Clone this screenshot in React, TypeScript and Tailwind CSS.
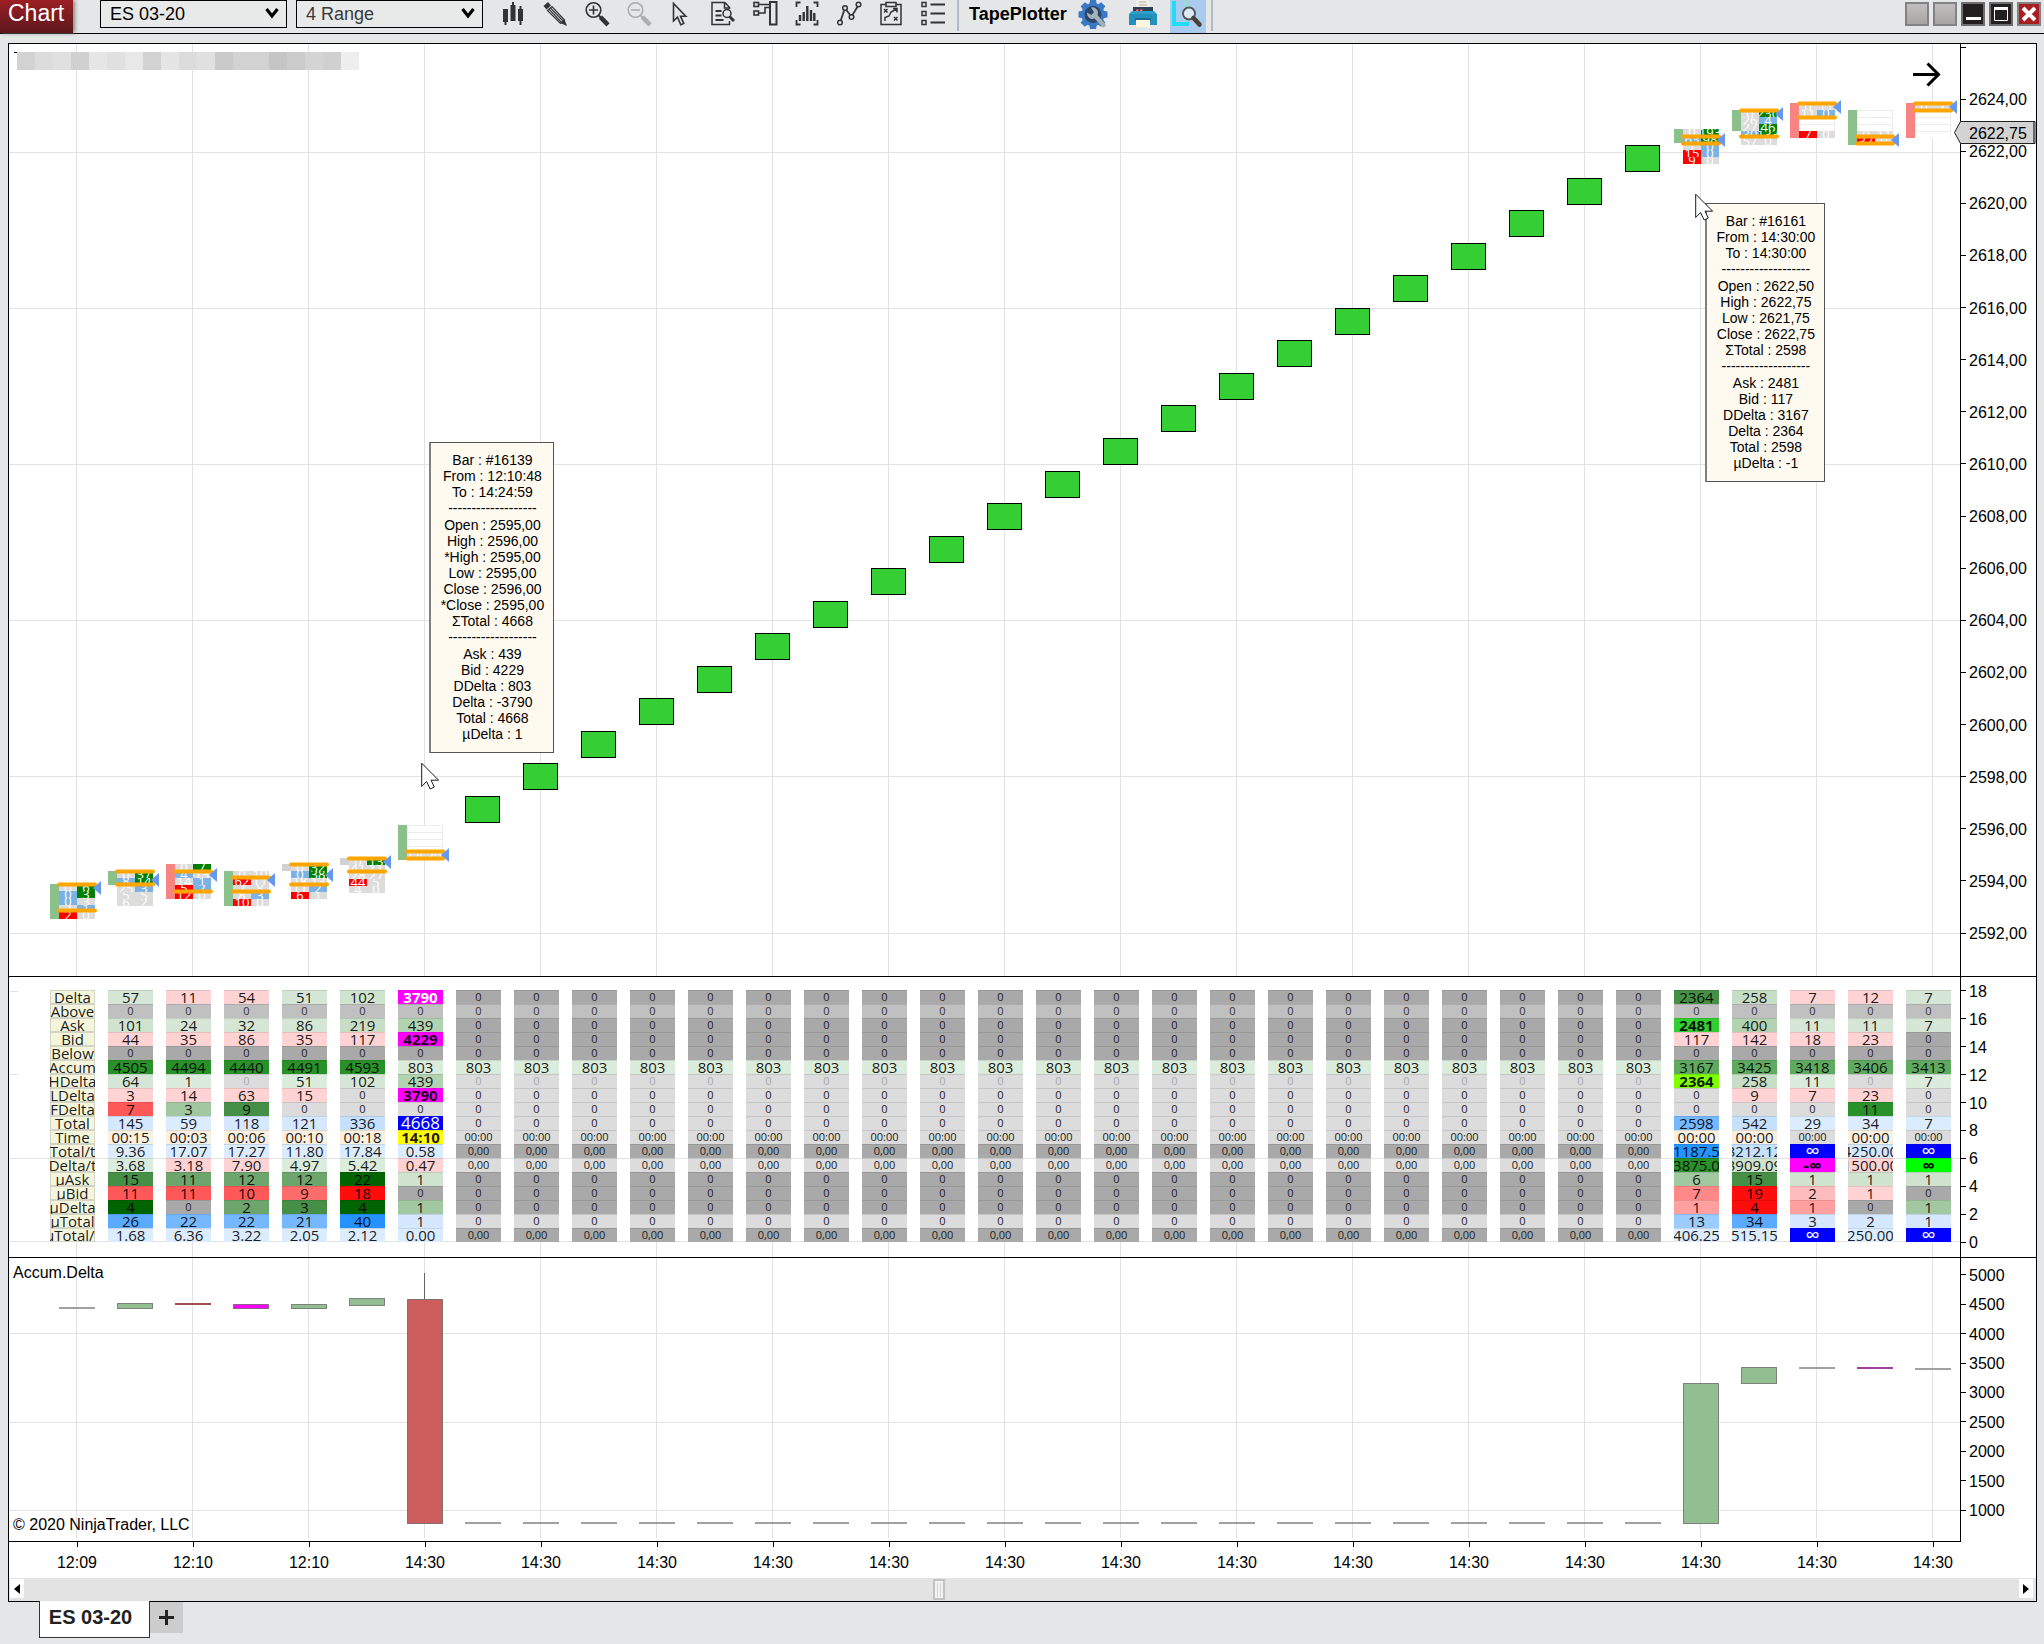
import React from "react";

/* ---------- shared chart geometry ---------- */

const STEP = 58;
const FIRST = 76;
const columns = Array.from({ length: 33 }, (_, i) => i);
const cx = (i: number) => FIRST + STEP * i;
const gridColumns = columns.filter((i) => i % 2 === 0);

const GRID = "#e2e2e2";

/* ---------- price panel data ---------- */

const prices = Array.from({ length: 17 }, (_, i) => `${2624 - i * 2},00`);
const counts = Array.from({ length: 10 }, (_, i) => `${18 - i * 2}`);
const deltas = Array.from({ length: 9 }, (_, i) => `${5000 - i * 500}`);
const times = ["12:09", "12:10", "12:10", ...Array.from({ length: 14 }, () => "14:30")];

const ink: Record<string, string> = {
  g: "#dcdcdc",
  b: "#7ab2e4",
  G: "#008000",
  R: "#ff0000",
  w: "#ffffff",
};

type Footprint = {
  col: number;
  top: number;
  side: [string, number, number];
  rows: [string, string, string, string][];
  lines: [number, number];
  close: number;
};

const UP = "#8bc08b";
const DOWN = "#f78383";
const FLAT = "#d2d2d2";
const blank: [string, string, string, string] = ["w", "", "w", ""];

const footprints: Footprint[] = [
  { col: 0, top: 884, side: [UP, 884, 35], rows: [["g", "0", "G", "6"], ["b", "0", "G", "3"], ["b", "0", "g", "3"], ["g", "2", "b", "1"], ["R", "2", "g", "0"]], lines: [884, 910], close: 888 },
  { col: 1, top: 871, side: [UP, 871, 14], rows: [["g", "0", "G", "37"], ["b", "8", "G", "14"], ["g", "25", "b", "3"], ["g", "5", "g", "5"], ["g", "6", "g", "2"]], lines: [871, 884], close: 880 },
  { col: 2, top: 864, side: [DOWN, 864, 35], rows: [["g", "0", "G", "7"], ["b", "4", "g", "13"], ["g", "14", "b", "1"], ["R", "5", "b", "2"], ["R", "12", "g", "0"]], lines: [871, 891], close: 875 },
  { col: 3, top: 871, side: [UP, 871, 35], rows: [["g", "0", "g", "10"], ["R", "62", "g", "11"], ["g", "7", "g", "8"], ["g", "8", "b", "3"], ["R", "10", "g", "0"]], lines: [877, 891], close: 880 },
  { col: 4, top: 864, side: [FLAT, 864, 7], rows: [["g", "0", "G", "32"], ["b", "0", "G", "38"], ["g", "18", "g", "13"], ["g", "11", "b", "2"], ["R", "6", "g", "1"]], lines: [864, 884], close: 875 },
  { col: 5, top: 858, side: [FLAT, 858, 7], rows: [["g", "0", "G", "13"], ["g", "41", "g", "11"], ["g", "28", "g", "27"], ["R", "44", "g", "5"], ["g", "4", "g", "0"]], lines: [858, 871], close: 862 },
  { col: 6, top: 825, side: [UP, 825, 35], rows: [blank, blank, blank, blank, ["g", "229", "g", "39"]], lines: [851, 858], close: 855 },
  { col: 28, top: 129, side: [UP, 129, 14], rows: [["g", "0", "G", "193"], ["b", "63", "G", "98"], ["g", "1", "b", "0"], ["R", "15", "b", "0"], ["R", "9", "g", "0"]], lines: [136, 143], close: 140 },
  { col: 29, top: 110, side: [UP, 110, 21], rows: [["g", "0", "G", "230"], ["g", "26", "b", "4"], ["g", "27", "G", "46"], ["b", "30", "G", "133"], ["g", "57", "g", "0"]], lines: [110, 136], close: 114 },
  { col: 30, top: 103, side: [DOWN, 103, 35], rows: [["g", "0", "g", "11"], ["g", "11", "b", "0"], blank, blank, ["R", "7", "g", "0"]], lines: [103, 117], close: 107 },
  { col: 31, top: 110, side: [UP, 110, 35], rows: [blank, blank, blank, ["g", "0", "g", "11"], ["R", "37", "g", "0"]], lines: [136, 143], close: 140 },
  { col: 32, top: 103, side: [DOWN, 103, 35], rows: [["g", "0", "g", "7"], blank, blank, blank, blank], lines: [103, 110], close: 107 },
];

function FootprintBar({ bar }: { bar: Footprint }) {
  const left = cx(bar.col) - 17;
  return (
    <g>
      <rect x={left - 9} y={bar.side[1]} width={9} height={bar.side[2]} fill={bar.side[0]} />
      {bar.rows.map(([lt, l, rt, r], k) => {
        const y = bar.top + k * 7;
        return (
          <g key={k}>
            {[[lt, l, 0], [rt, r, 18]].map(([tone, text, dx]) => (
              <svg key={String(dx)} x={left + Number(dx)} y={y} width={18} height={7}>
                <rect width={18} height={7} fill={ink[String(tone)]} />
                {tone === "w" && <path d="M0 .5H18" stroke="#ececec" />}
                {tone === "w" && <path d={dx === 0 ? "M.5 0V7" : "M17.5 0V7"} stroke="#ececec" />}
                <text x={9} y={8} textAnchor="middle" fontSize={13} fill="#fff" fontFamily="Open Sans, sans-serif">
                  {text}
                </text>
              </svg>
            ))}
          </g>
        );
      })}
      {bar.lines.map((y) => (
        <path key={y} d={`M${left} ${y + 0.5}H${left + 36}`} stroke="#ffa500" strokeWidth={4} strokeLinecap="round" />
      ))}
      <path d={`M${left + 34} ${bar.close}l8 -7v14z`} fill="#6699ee" />
    </g>
  );
}

function PricePlot() {
  return (
    <svg viewBox="9 44 1951 932" className="block h-auto w-full" role="img" aria-label="Price chart">
      {gridColumns.map((i) => (
        <path key={i} d={`M${cx(i) + 0.5} 44V976`} stroke={GRID} />
      ))}
      {[152, 308, 464, 620, 776, 933].map((y) => (
        <path key={y} d={`M9 ${y + 0.5}H1960`} stroke={GRID} />
      ))}
      {Array.from({ length: 21 }, (_, k) => (
        <rect
          key={k}
          x={465.5 + STEP * k}
          y={Math.round(796 - 32.55 * k) + 0.5}
          width={34}
          height={26}
          fill="#35cf35"
          stroke="#000"
        />
      ))}
      {footprints.map((bar) => (
        <FootprintBar key={bar.col} bar={bar} />
      ))}
      <path d="M1913 74.5H1938M1927.500 63.500L1938.500 74.500L1927.500 85.500" fill="none" stroke="#000" strokeWidth={3} />
    </svg>
  );
}

/* ---------- statistics table ---------- */

const tone: Record<string, string> = {
  D: "bg-[#a9a9a9] text-[11px] text-[#222]",
  M: "bg-[#c0c0c0] text-[11px] text-[#333]",
  L: "bg-[#dcdcdc] text-[11px] text-[#222]",
  F: "bg-[#dcdcdc] text-[11px] text-[#aaa]",
  g0: "bg-[#dcecdc]",
  g1: "bg-[#d6e6d6]",
  g2: "bg-[#cfe3cf]",
  g3: "bg-[#c6dec6]",
  g4: "bg-[#b2d2b2]",
  g5: "bg-[#a2c8a2]",
  g6: "bg-[#6ca66c]",
  g7: "bg-[#60aa60]",
  g8: "bg-[#468f46]",
  g9: "bg-[#2a902a]",
  gx: "bg-[#006400]",
  r1: "bg-[#ffd3d3]",
  r2: "bg-[#ffbcbc]",
  r3: "bg-[#ffa0a0]",
  r4: "bg-[#ff8888]",
  r5: "bg-[#ff6c6c]",
  r6: "bg-[#ff5858]",
  r7: "bg-[#ff0d0d]",
  b0: "bg-[#dcecff]",
  b1: "bg-[#d6e8ff]",
  b2: "bg-[#c6e0ff]",
  b3: "bg-[#9accff]",
  b4: "bg-[#76b8ff]",
  b5: "bg-[#5aaaff]",
  b6: "bg-[#2492ff]",
  t: "bg-[#faf0e0]",
  y: "bg-[#ffff00] font-bold",
  mw: "bg-[#ff00ff] font-bold text-white",
  mb: "bg-[#ff00ff] font-bold",
  bw: "bg-[#0000ff] text-white text-[17px]",
  iw: "bg-[#0000ff] text-white text-[20px]",
  im: "bg-[#ff00ff] font-bold text-[18px]",
  il: "bg-[#00ff00] font-bold text-[18px]",
  lg: "bg-[#32cd32] font-bold",
  lc: "bg-[#7fff00] font-bold",
};

const stats: { label: string; left: string; mid: string; right: string }[] = [
  { label: "Delta", left: "57 g1,11 r1,54 r1,51 g1,102 g2,3790 mw", mid: "0 D", right: "2364 g8,258 g3,7 r1,12 r1,7 g1" },
  { label: "Above", left: "0 M,0 M,0 M,0 M,0 M,0 M", mid: "0 M", right: "0 M,0 M,0 M,0 M,0 M" },
  { label: "Ask", left: "101 g2,24 g1,32 g1,86 g1,219 g3,439 g4", mid: "0 D", right: "2481 lg,400 g4,11 g1,11 g1,7 g1" },
  { label: "Bid", left: "44 r1,35 r1,86 r1,35 r1,117 r1,4229 mb", mid: "0 D", right: "117 r1,142 r1,18 r1,23 r1,0 D" },
  { label: "Below", left: "0 D,0 D,0 D,0 D,0 D,0 D", mid: "0 D", right: "0 D,0 D,0 D,0 D,0 D" },
  { label: "Accum", left: "4505 g9,4494 g9,4440 g9,4491 g9,4593 g9,803 g0", mid: "803 g0", right: "3167 g7,3425 g7,3418 g7,3406 g7,3413 g7" },
  { label: "HDelta", left: "64 g1,1 g0,0 F,51 g0,102 g1,439 g4", mid: "0 F", right: "2364 lc,258 g3,11 g0,0 F,7 g0" },
  { label: "LDelta", left: "3 r1,14 r1,63 r1,15 r1,0 L,3790 mb", mid: "0 L", right: "0 L,9 r1,7 r1,23 r1,0 L" },
  { label: "FDelta", left: "7 r6,3 g5,9 g8,0 L,0 L,0 L", mid: "0 L", right: "0 L,0 L,0 L,11 g9,0 L" },
  { label: "Total", left: "145 b1,59 b0,118 b1,121 b1,336 b2,4668 bw", mid: "0 L", right: "2598 b4,542 b2,29 b0,34 b0,7 b0" },
  { label: "Time", left: "00:15 t,00:03 t,00:06 t,00:10 t,00:18 t,14:10 y", mid: "00:00 L", right: "00:00 t,00:00 t,00:00 L,00:00 t,00:00 L" },
  { label: "Total/t", left: "9.36 b0,17.07 b0,17.27 b0,11.80 b0,17.84 b0,0.58 b0", mid: "0,00 D", right: "1187.5 b6,3212.12 b2,∞ iw,4250.00 b1,∞ iw" },
  { label: "Delta/t", left: "3.68 g0,3.18 r1,7.90 r1,4.97 g0,5.42 g0,0.47 r1", mid: "0,00 L", right: "3875.0 g9,3909.09 g2,-∞ im,1500.00 r1,∞ il" },
  { label: "µAsk", left: "15 g8,11 g6,12 g6,12 g6,22 gx,1 g2", mid: "0 D", right: "6 g5,15 g8,1 g2,1 g2,1 g2" },
  { label: "µBid", left: "11 r6,11 r6,10 r6,9 r5,18 r7,0 D", mid: "0 D", right: "7 r4,19 r7,2 r2,1 r1,0 D" },
  { label: "µDelta", left: "4 gx,0 D,2 g6,3 g8,4 gx,1 g5", mid: "0 D", right: "1 r3,4 r7,1 r3,0 D,1 g5" },
  { label: "µTotal", left: "26 b5,22 b4,22 b4,21 b4,40 b6,1 b1", mid: "0 L", right: "13 b3,34 b5,3 b1,2 b1,1 b1" },
  { label: "µTotal/t", left: "1.68 b0,6.36 b0,3.22 b0,2.05 b0,2.12 b0,0.00 b0", mid: "0,00 D", right: "406.25 b0,515.15 b0,∞ iw,250.00 b0,∞ iw" },
];

const splitCells = (s: string) => s.split(/,(?=[^,]+ )/).map((c) => c.split(" "));

function StatsTable() {
  return (
    <table className="w-full table-fixed border-separate border-spacing-x-[13px] border-spacing-y-0 font-['Open_Sans',sans-serif] text-[15px] text-black/90">
      <tbody>
        {stats.map((row) => {
          const mid = row.mid.split(" ");
          const cells = [...splitCells(row.left), ...Array.from({ length: 21 }, () => mid), ...splitCells(row.right)];
          return (
            <tr key={row.label}>
              <th scope="row" className="p-0 font-normal">
                <div className="flex h-[14px] justify-center overflow-hidden bg-[#f5f5dc] leading-[14px] whitespace-nowrap inset-shadow-[0_0_0_1px_#d4d4c6]">
                  {row.label}
                </div>
              </th>
              {cells.map(([text, key], i) => (
                <td key={i} className="p-0">
                  <div
                    className={`flex h-[14px] justify-center overflow-hidden whitespace-nowrap inset-shadow-[0_1px_0_0_rgba(0,0,0,0.1)] ${tone[key]}`}
                  >
                    <span className="leading-[14px]">{text}</span>
                  </div>
                </td>
              ))}
            </tr>
          );
        })}
      </tbody>
    </table>
  );
}

/* ---------- accumulated delta panel ---------- */

const candles: { col: number; top: number; height: number; fill: string }[] = [
  { col: 1, top: 1303, height: 5, fill: "#92be92" },
  { col: 3, top: 1304, height: 4, fill: "#ff00ff" },
  { col: 4, top: 1304, height: 4, fill: "#92be92" },
  { col: 5, top: 1298, height: 7, fill: "#92be92" },
  { col: 6, top: 1299, height: 224, fill: "#cd5c5c" },
  { col: 28, top: 1383, height: 140, fill: "#92be92" },
  { col: 29, top: 1367, height: 16, fill: "#92be92" },
];

const flats: [number, number, string][] = [
  [0, 1308, "#a0a0a0"],
  [2, 1304, "#a05050"],
  ...Array.from({ length: 21 }, (_, k): [number, number, string] => [7 + k, 1523, "#a0a0a0"]),
  [30, 1368, "#a0a0a0"],
  [31, 1368, "#a040a0"],
  [32, 1369, "#a0a0a0"],
];

function DeltaPlot() {
  return (
    <svg viewBox="9 1258 1951 283" className="block h-auto w-full" role="img" aria-label="Accumulated delta">
      {gridColumns.map((i) => (
        <path key={i} d={`M${cx(i) + 0.5} 1258V1538`} stroke={GRID} />
      ))}
      {[1333, 1422, 1510].map((y) => (
        <path key={y} d={`M9 ${y + 0.5}H1960`} stroke={GRID} />
      ))}
      <path d="M424.500 1273V1299" stroke="#666" />
      {candles.map((c) => (
        <rect
          key={c.col}
          x={cx(c.col) - 16.5}
          y={c.top + 0.5}
          width={35}
          height={c.height}
          fill={c.fill}
          stroke="#505050"
          strokeOpacity={0.65}
        />
      ))}
      {flats.map(([col, y, color]) => (
        <path key={col} d={`M${cx(col) - 17} ${y}h36`} stroke={color} strokeWidth={2} />
      ))}
    </svg>
  );
}

/* ---------- scales, tooltips, cursor ---------- */

function Scale({ labels, className }: { labels: string[]; className: string }) {
  return (
    <div className={`flex w-[76px] shrink-0 flex-col border-l border-black ${className}`}>
      {labels.map((l) => (
        <div key={l} className="flex flex-1 items-center gap-[3px]">
          <span className="h-px w-[5px] bg-black" />
          <span className="pt-[2px] leading-4">{l}</span>
        </div>
      ))}
    </div>
  );
}

const DASH = "-------------------";

const leftTip = [
  "Bar : #16139", "From : 12:10:48", "To : 14:24:59", DASH, "Open : 2595,00", "High : 2596,00", "*High : 2595,00",
  "Low : 2595,00", "Close : 2596,00", "*Close : 2595,00", "ΣTotal : 4668", DASH, "Ask : 439", "Bid : 4229",
  "DDelta : 803", "Delta : -3790", "Total : 4668", "µDelta : 1",
];

const rightTip = [
  "Bar : #16161", "From : 14:30:00", "To : 14:30:00", DASH, "Open : 2622,50", "High : 2622,75", "Low : 2621,75",
  "Close : 2622,75", "ΣTotal : 2598", DASH, "Ask : 2481", "Bid : 117", "DDelta : 3167", "Delta : 2364",
  "Total : 2598", "µDelta : -1",
];

function BarTip({ lines, className }: { lines: string[]; className: string }) {
  return (
    <div
      role="tooltip"
      className={`absolute border border-l-2 border-[#555] border-l-[#808080] bg-[#fffaf0] pt-[9px] pb-[10px] text-center text-sm leading-4 text-black ${className}`}
    >
      {lines.map((l, i) => (
        <div key={i} className={l === DASH ? "leading-[17px]" : "leading-4"}>
          {l}
        </div>
      ))}
    </div>
  );
}

function Cursor({ className }: { className: string }) {
  return (
    <svg viewBox="0 0 19 28" className={`absolute h-7 w-[19px] ${className}`} aria-hidden="true">
      <path d="M.7 1.200V24.500L5.500 19.500L9.200 27L13.300 25L10 18.200H17.600Z" fill="#fff" stroke="#1a1a2a" />
    </svg>
  );
}

const mosaic = [
  "bg-[#d2d2d2]", "bg-[#dcdcdc]", "bg-[#e0e0e0]", "bg-[#d0d0d0]", "bg-[#e6e6e6]", "bg-[#e0e0e0]", "bg-[#e8e8e8]",
  "bg-[#d2d2d2]", "bg-[#e5e5e5]", "bg-[#dcdcdc]", "bg-[#e0e0e0]", "bg-[#cacaca]", "bg-[#d2d2d2]", "bg-[#d2d2d2]",
  "bg-[#c5c5c5]", "bg-[#cccccc]", "bg-[#d4d4d4]", "bg-[#d0d0d0]", "bg-[#eeeeee]",
];

/* ---------- toolbar ---------- */

const K = "#333333";

const tools: { name: string; art: React.ReactNode }[] = [
  {
    name: "Chart style",
    art: (
      <path
        fill={K}
        d="M2 9h5v13h-1.500v3h-2v-3H2zM9.500 5h1.500V2h2v3h1.500v16H9.500zM17 9h1.500V6h2v3H22v12h-1.500v4h-2v-4H17z"
      />
    ),
  },
  {
    name: "Drawing tools",
    art: (
      <g>
        <path d="M.5 6L5 2l3 3.500L3.500 9.500z" fill={K} />
        <path d="M4.500 10.500L9 6.500L21.500 20L17.500 23.500z" fill="#f2f2f2" stroke={K} strokeWidth={1.200} />
        <path d="M6 9.200L19 23M7.500 8L20.500 21.500" stroke={K} strokeWidth={1.200} />
        <path d="M17.500 23L21.500 19.500L24 26z" fill={K} />
      </g>
    ),
  },
  {
    name: "Zoom in",
    art: (
      <g fill="none" stroke={K}>
        <circle cx={8.500} cy={10} r={7.300} strokeWidth={1.600} />
        <path d="M8.500 5.500v9M4 10h9" strokeWidth={1.600} />
        <path d="M13.800 15.500l2.500 2.500" strokeWidth={2} />
        <path d="M15.500 17.200L23 24.800" strokeWidth={4.500} />
      </g>
    ),
  },
  {
    name: "Zoom out",
    art: (
      <g fill="none" stroke="#adadad">
        <circle cx={8.500} cy={10} r={7.300} strokeWidth={1.600} />
        <path d="M4 10h9" strokeWidth={1.600} />
        <path d="M13.800 15.500l2.500 2.500" strokeWidth={2} />
        <path d="M15.500 17.200L23 24.800" strokeWidth={4.500} />
      </g>
    ),
  },
  {
    name: "Pointer",
    art: <path d="M4.500 3.500V21l4-3.800 3.300 7.600 3-1.400-3.300-7.200h5.300z" fill="none" stroke={K} strokeWidth={1.600} />,
  },
  {
    name: "Data box",
    art: (
      <g fill="none" stroke={K} strokeWidth={1.500}>
        <path d="M14 2.500H1v22h17.500V21M14 2.500l4.500 5V9M13.500 3v5h5" />
        <path d="M4.500 11h6M4.500 15.500h6M4.500 20h8" strokeWidth={2} />
        <circle cx={16} cy={13.500} r={4} fill="#e6e7e9" />
        <path d="M18.500 16.500L23 21" strokeWidth={3} />
      </g>
    ),
  },
  {
    name: "Chart trader",
    art: (
      <g fill="none" stroke={K} strokeWidth={1.600}>
        <rect x={1} y={2.500} width={4.500} height={4} />
        <rect x={1} y={11} width={4.500} height={4} />
        <path d="M5.500 4.500H17M5.500 13H12V7.500H17" />
        <rect x={17} y={2} width={6.500} height={22.500} strokeWidth={2} />
      </g>
    ),
  },
  {
    name: "Indicators",
    art: (
      <g fill="none" stroke={K}>
        <path d="M5.500 2.500H1.500V7M18.500 2.500h4V7M5.500 24.500H1.500V20M18.500 24.500h4V20" strokeWidth={1.800} />
        <path d="M5 15v6M8.700 12v9M12.300 6v15M16 10v11M19.300 13v8" strokeWidth={2.400} />
      </g>
    ),
  },
  {
    name: "Drawing objects",
    art: (
      <g fill="none" stroke={K} strokeWidth={1.500}>
        <circle cx={3} cy={22.500} r={2.300} />
        <circle cx={8} cy={8} r={2.300} />
        <circle cx={14.500} cy={17} r={2.300} />
        <circle cx={21.500} cy={4.500} r={2.300} />
        <path d="M3.800 20.200L7.200 10.300M9.300 10L13.200 15M15.500 14.900L20.500 6.700" strokeWidth={1.800} />
      </g>
    ),
  },
  {
    name: "Strategies",
    art: (
      <g fill="none" stroke={K} strokeWidth={1.500}>
        <path d="M7 4.500H2v20h20v-20H17" />
        <rect x={7} y={2.500} width={10} height={4} />
        <path d="M5 9l3.500 3.500M8.500 9L5 12.500M15 17l3.500 3.500M18.500 17L15 20.500M6 21v-3.500l4-1.500 2-4 5.500-3M14 8.500h4v4" />
      </g>
    ),
  },
  {
    name: "Properties",
    art: (
      <g fill="none" stroke={K}>
        <path d="M1 2.500h4v4H1zM1 11.500h4v4H1zM1 20.500h4v4H1z" strokeWidth={1.500} />
        <path d="M9.500 4.500H24M9.500 13.500H24M9.500 22.500H24" strokeWidth={2} />
      </g>
    ),
  },
];

function Gear() {
  const teeth = Array.from({ length: 8 }, (_, i) => i * 45);
  return (
    <svg viewBox="0 0 30 30" className="size-[30px]" aria-hidden="true">
      {teeth.map((a) => (
        <path key={a} d="M12 0h6l1 6h-8z" fill="#3a79c6" transform={`rotate(${a} 15 14.500)`} />
      ))}
      <circle cx={15} cy={14.500} r={11.500} fill="#3a79c6" />
      <circle cx={15} cy={14.500} r={8.500} fill="#2b4668" />
      <path
        d="M13 7.500a5.500 5.500 0 0 1 6.500 7.500l8.500 10-2.500 3L16.500 18.500a5.500 5.500 0 0 1-7.500-6l4.500 2.500 2.500-3z"
        fill="#a3b2b4"
      />
    </svg>
  );
}

function Printer() {
  return (
    <svg viewBox="0 0 30 30" className="size-[30px]" aria-hidden="true">
      <path d="M8 0h12l2 3v8H8z" fill="#f2efe6" />
      <path d="M11 2h7M11 5h8" stroke="#b5b0a2" strokeWidth={1.200} />
      <path d="M5 7h20v9H5z" fill="#2f4156" />
      <path d="M8 10.500h2.500M12 10.500h2.500" stroke="#ff6a4a" strokeWidth={2} />
      <path d="M1 14h28v11H1z" fill="#2490bd" />
      <path d="M1 14h28l-3-3H4z" fill="#2f9fca" />
      <path d="M7 18h16v3H7z" fill="#1b6f96" />
      <path d="M8 20h14v8l-4-1H8z" fill="#fff6e2" />
    </svg>
  );
}

function Magnifier() {
  return (
    <svg viewBox="0 0 36 33" className="h-full w-9" aria-hidden="true">
      <path d="M14 0h5v22h-5z" fill="#9fd6dd" />
      <path d="M2 1h4v21h13v4H2z" fill="#22dcf5" />
      <circle cx={19} cy={13.500} r={6} fill="#dbe9f5" stroke="#555" strokeWidth={1.800} />
      <path d="M23.500 18L29.500 24.500" stroke="#4a3f38" strokeWidth={4.500} strokeLinecap="round" />
    </svg>
  );
}

function Picker({ label, value, className }: { label: string; value: string; className: string }) {
  return (
    <div className="relative h-7 w-[187px]">
      <select
        aria-label={label}
        defaultValue={value}
        className={`h-full w-full appearance-none border border-black bg-[#e8e9e9] pl-[9px] text-lg leading-6 ${className}`}
      >
        <option>{value}</option>
      </select>
      <svg viewBox="0 0 14 11" className="pointer-events-none absolute top-2 right-2 h-[11px] w-[14px]" aria-hidden="true">
        <path d="M1.500 1L7 8L12.500 1" fill="none" stroke="#000" strokeWidth={3.200} />
      </svg>
    </div>
  );
}

function Toolbar() {
  return (
    <header className="flex h-[34px] items-start border-b border-black">
      <h1 className="h-[33px] w-[73px] bg-linear-to-b from-[#9c1f24] to-[#5c171b] pl-2 text-[23px] leading-[26px] text-white shadow-[2px_0_4px_#888]">
        Chart
      </h1>
      <div className="ml-[27px] flex gap-[9px]">
        <Picker label="Instrument" value="ES 03-20" className="text-black" />
        <Picker label="Interval" value="4 Range" className="text-[#3a3a3a]" />
      </div>
      <div className="ml-[9px] flex">
        {tools.map((t) => (
          <button key={t.name} type="button" aria-label={t.name} className="flex h-7 w-[42px] items-start justify-center">
            <svg viewBox="0 0 25 28" className="h-7 w-[25px]" aria-hidden="true">
              {t.art}
            </svg>
          </button>
        ))}
      </div>
      <span className="ml-[3px] h-[31px] w-[2px] bg-[#b4bac4]" />
      <button type="button" className="ml-[10px] text-lg leading-7 font-bold">
        TapePlotter
      </button>
      <button type="button" aria-label="Settings" className="ml-[11px]">
        <Gear />
      </button>
      <button type="button" aria-label="Print" className="ml-5">
        <Printer />
      </button>
      <button type="button" aria-label="Inspect" className="ml-3 h-[33px] w-9 bg-[#abcbee]">
        <Magnifier />
      </button>
      <span className="ml-[5px] h-[31px] w-[2px] bg-[#b4bac4]" />
      <div className="mt-[2px] mr-[3px] ml-auto flex gap-1">
        <button type="button" aria-label="Link" className="size-6 border-2 border-[#828282] bg-linear-to-b from-[#c0bebe] to-[#a9a5a5]" />
        <button type="button" aria-label="Pin" className="size-6 border-2 border-[#828282] bg-linear-to-b from-[#c0bebe] to-[#a9a5a5]" />
        <button type="button" aria-label="Minimize" className="size-6 border-2 border-[#6e6e6e] bg-[#231f20]">
          <svg viewBox="0 0 20 20" aria-hidden="true">
            <path d="M3 14.500h15" stroke="#fff" strokeWidth={3} />
          </svg>
        </button>
        <button type="button" aria-label="Maximize" className="size-6 border-2 border-[#6e6e6e] bg-[#231f20]">
          <svg viewBox="0 0 20 20" aria-hidden="true">
            <path d="M3.500 3.500h13v13h-13z" fill="none" stroke="#fff" />
            <path d="M3 4.500h14" stroke="#fff" strokeWidth={3} />
          </svg>
        </button>
        <button type="button" aria-label="Close" className="size-6 border-2 border-[#828282] bg-[#a81e22]">
          <svg viewBox="0 0 20 20" aria-hidden="true">
            <path d="M4 4L16 16M16 4L4 16" stroke="#fff" strokeWidth={4} />
          </svg>
        </button>
      </div>
    </header>
  );
}

/* ---------- page ---------- */

export default function App() {
  return (
    <div className="min-h-screen bg-[#e5e6e8] pb-[6px] font-['Liberation_Sans',sans-serif] text-black">
      <Toolbar />

      <main className="mt-[9px] mr-[7px] ml-2 border border-black bg-white">
        <section className="flex border-b border-black">
          <div className="relative min-w-0 flex-1">
            <PricePlot />
            <div className="absolute top-2 left-[5px] flex items-start" aria-hidden="true">
              <span className="h-px w-[3px] bg-black" />
              {mosaic.map((c, i) => (
                <span key={i} className={`h-[18px] w-[18px] ${c}`} />
              ))}
            </div>
            <BarTip lines={leftTip} className="top-[42.7%] left-[21.55%] w-[125px]" />
            <BarTip lines={rightTip} className="top-[17.1%] left-[86.95%] w-[120px]" />
            <Cursor className="top-[77%] left-[21.1%]" />
            <Cursor className="top-[16%] left-[86.4%]" />
          </div>
          <div className="relative flex">
            <Scale labels={prices} className="pt-[29px] pb-[17px]" />
            <span className="absolute top-[3px] left-0 h-px w-[6px] bg-black" />
            <div className="absolute top-[77px] -left-[6px] flex h-[23px] w-[82px] items-center">
              <svg viewBox="0 0 82 23" className="absolute inset-0 h-full w-full" aria-hidden="true">
                <path d="M.5 11.500L6.500 .5H81V22.500H6.500Z" fill="#d3d3d3" stroke="#222" />
                <path d="M80 1V22" stroke="#666" strokeWidth={2} />
              </svg>
              <span className="relative ml-[15px] pt-[2px] leading-4">2622,75</span>
            </div>
          </div>
        </section>

        <section className="flex border-b border-black">
          <div className="relative min-w-0 flex-1">
            <svg viewBox="9 977 1951 280" preserveAspectRatio="none" className="absolute inset-0 h-full w-full" aria-hidden="true">
              {gridColumns.map((i) => (
                <path key={i} d={`M${cx(i) + 0.5} 1242V1257`} stroke={GRID} />
              ))}
              {[991, 1074, 1158, 1241].map((y) => (
                <path key={y} d={`M10 ${y + 0.5}H${y > 1100 ? 1960 : 18}`} stroke={GRID} />
              ))}
            </svg>
            <div className="relative -mr-1 pt-[13px] pb-[15px] pl-7">
              <StatsTable />
            </div>
          </div>
          <Scale labels={counts} className="pb-px" />
        </section>

        <section className="flex">
          <div className="relative min-w-0 flex-1 border-b border-black">
            <DeltaPlot />
            <h2 className="absolute top-[5px] left-1 leading-5">Accum.Delta</h2>
            <p className="absolute bottom-[6px] left-1 leading-5">© 2020 NinjaTrader, LLC</p>
          </div>
          <Scale labels={deltas} className="pt-[2px] pb-[17px]" />
        </section>

        <div className="flex h-9 pr-[45px] pl-[10px]">
          {times.map((t, i) => (
            <div key={i} className="flex flex-1 flex-col items-center gap-[6px]">
              <span className="h-[5px] w-px bg-black" />
              <span className="leading-5">{t}</span>
            </div>
          ))}
        </div>

        <div className="flex h-[23px] items-start justify-between bg-[#e3e3e3] pt-px pr-[3px] pl-px">
          <button type="button" aria-label="Scroll left" className="flex h-[19px] w-[14px] items-center justify-center bg-white">
            <svg viewBox="0 0 6 10" className="h-[10px] w-[6px]" aria-hidden="true">
              <path d="M6 0V10L0 5z" />
            </svg>
          </button>
          <span className="mr-[166px] flex h-[21px] w-3 items-center justify-center border-2 border-[#c2c2c2] bg-[#f2f2f2]">
            <span className="h-[14px] w-1 border-x border-[#d4d4d4]" />
          </span>
          <button type="button" aria-label="Scroll right" className="flex h-[19px] w-[14px] items-center justify-center bg-white">
            <svg viewBox="0 0 6 10" className="h-[10px] w-[6px]" aria-hidden="true">
              <path d="M0 0V10L6 5z" />
            </svg>
          </button>
        </div>
      </main>

      <nav className="-mt-px flex items-start pl-[39px]">
        <button type="button" className="relative h-[37px] w-[111px] border border-t-0 border-[#333] bg-white pr-2 pb-[5px] text-xl font-bold text-[#222]">
          ES 03-20
        </button>
        <button type="button" aria-label="Add tab" className="mt-px flex h-[31px] w-[33px] items-center justify-center bg-[#cccccc]">
          <svg viewBox="0 0 15 15" className="size-[15px]" aria-hidden="true">
            <path d="M7.500 0V15M0 7.500H15" stroke="#222" strokeWidth={3} />
          </svg>
        </button>
      </nav>
    </div>
  );
}
